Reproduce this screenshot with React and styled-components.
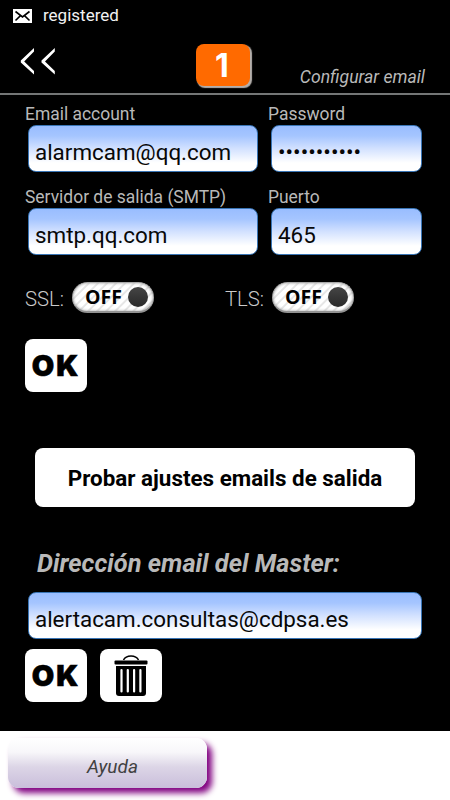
import React from "react";
import styled, { createGlobalStyle } from "styled-components";

const GlobalStyle = createGlobalStyle`
  * {
    box-sizing: border-box;
  }

  body {
    margin: 0;
    background: #000;
    font-family: Roboto, sans-serif;
  }
`;

const Screen = styled.div`
  display: flex;
  flex-direction: column;
  width: 450px;
  height: 800px;
  overflow: hidden;
  background: #000;
`;

const StatusBar = styled.div`
  display: flex;
  align-items: center;
  gap: 11px;
  height: 31px;
  padding-left: 13px;
  color: #f2f2f2;
  font-size: 17px;
  line-height: 31px;
`;

const Header = styled.header`
  display: flex;
  align-items: flex-start;
  height: 64px;
  padding: 13px 25px 0 20px;
  border-bottom: 2px solid #747676;
`;

const BackButton = styled.button`
  display: flex;
  width: 36px;
  margin: 3px 140px 0 0;
  padding: 0;
  border: 0;
  background: none;
`;

const Badge = styled.div`
  width: 54px;
  height: 42px;
  padding-right: 2px;
  border-radius: 8px;
  background: #ff6a00;
  box-shadow: 1.5px 1.5px 1px #b5b0ac;
  color: #fff;
  font: bold 32px/43px Inter, sans-serif;
  text-align: center;
`;

const Title = styled.div`
  margin: 21px 0 0 auto;
  color: #b9b9b9;
  font-size: 17.6px;
  font-style: italic;
  line-height: 24px;
  white-space: nowrap;
`;

const Main = styled.main`
  display: flex;
  flex-direction: column;
  height: 636px;
  padding: 9px 28px 0 25px;
`;

const FieldRow = styled.div`
  display: grid;
  grid-template-columns: 233px 154px;
  column-gap: 10px;
  height: ${(props) => props.$height}px;
`;

const Label = styled.label`
  display: block;
  height: 21px;
  color: #b9b9b9;
  font-size: 17.45px;
  line-height: 21px;
  white-space: nowrap;
`;

const Input = styled.input`
  display: block;
  width: ${(props) => props.$width}px;
  height: 47px;
  margin-left: 3px;
  padding: 7px 6px 0;
  border: 1px solid #3975b5;
  border-radius: 8px;
  outline: 0;
  background: linear-gradient(#99bdff 0%, #a5c5ff 22%, #d2e1ff 50%, #fff 82%);
  color: #080808;
  font-family: Roboto, sans-serif;
  font-size: 22.4px;
`;

const ToggleRow = styled.div`
  display: grid;
  grid-template-columns: 200px 130px;
  height: 31px;
  margin-top: 27px;
`;

const ToggleField = styled.div`
  display: grid;
  grid-template-columns: 47px 82px;
  color: #cacaca;
  font-size: 20.3px;
  font-weight: 300;
  line-height: 34px;
`;

const Switch = styled.button`
  display: flex;
  align-items: center;
  gap: 6px;
  width: 82px;
  height: 31px;
  padding: 0 0 1px 12px;
  border: 1px solid #aaa;
  border-bottom: 2px solid #929292;
  border-radius: 16px;
  background: repeating-linear-gradient(
    135deg,
    #fff 0,
    #fff 3.5px,
    #e6e6e6 4.5px,
    #e6e6e6 5.5px,
    #fff 6.4px
  );
  box-shadow: inset 0 0 3px #999;
  color: #000;
  font: bold 19.5px/26px "Open Sans", sans-serif;
`;

const Knob = styled.span`
  width: 20px;
  height: 20px;
  flex-shrink: 0;
  border-radius: 50%;
  background: linear-gradient(#454545, #292929);
`;

const Actions = styled.div`
  display: flex;
  gap: 13px;
  margin-top: ${(props) => props.$top}px;
`;

const ActionButton = styled.button`
  display: flex;
  align-items: center;
  justify-content: center;
  width: 62px;
  height: 53px;
  padding: 0;
  border: 0;
  border-radius: 8px;
  background: #fff;
  color: #000;
  font: 900 29px/53px Inter, sans-serif;
  letter-spacing: 2px;
  -webkit-text-stroke: 0.6px #000;
`;

const TestButton = styled.button`
  width: 380px;
  height: 59px;
  margin: 56px 0 0 10px;
  padding: 1px 0 0;
  border: 0;
  border-radius: 8px;
  background: #fff;
  color: #000;
  font: bold 22.4px/28px Roboto, sans-serif;
  white-space: nowrap;
`;

const MasterHeading = styled.h2`
  height: 30px;
  margin: 41px 0 14px 12px;
  color: #b9b9b9;
  font-size: 25.4px;
  font-style: italic;
  font-weight: bold;
  line-height: 30px;
  white-space: nowrap;
`;

const Footer = styled.footer`
  height: 69px;
  padding: 7px 8px;
  background: #fff;
`;

const HelpButton = styled.button`
  width: 199px;
  height: 50px;
  padding: 8px 0 0 10px;
  border: 0;
  border-radius: 11px;
  background: linear-gradient(#fff 0%, #f8f7fa 28%, #dcd5e6 58%, #c9bedb 100%);
  box-shadow: 5px 5px 6px #800080;
  color: #414141;
  font: italic 19px/24px Roboto, sans-serif;
`;

function EnvelopeIcon() {
  return (
    <svg width="19" height="14" viewBox="0 0 19 14">
      <path fill="#fff" d="M0 0h19v14H0z" />
      <path
        d="M2.5 2.5 9.5 8 16.5 2.5M2.5 11.5 7.5 6.7M16.5 11.5 11.5 6.7"
        fill="none"
        stroke="#000"
        strokeWidth="1.6"
      />
    </svg>
  );
}

function BackIcon() {
  return (
    <svg width="36" height="28" viewBox="0 0 36 28">
      <path
        fill="#fff"
        d="M14 1v3.5L4.2 14.5 14 24v3.5L.8 15.5v-2zM34.8 1v3.5L25 14.5l9.8 9.5v3.5L21.5 15.5v-2z"
      />
    </svg>
  );
}

function TrashIcon() {
  return (
    <svg width="34" height="43" viewBox="0 0 34 43">
      <path
        d="M9.5 6C12 .5 22 .5 24.5 6"
        fill="none"
        stroke="#000"
        strokeWidth="1.5"
      />
      <rect x=".5" y="6.5" width="33" height="4" rx="1" />
      <path d="M2 12h30v27q0 3-3 3H5q-3 0-3-3z" />
      <path
        d="M7.5 16v21.5M13.8 16v21.5M20.1 16v21.5M26.4 16v21.5"
        stroke="#fff"
        strokeWidth="2.2"
        strokeLinecap="round"
      />
    </svg>
  );
}

function Field({ id, label, width, ...inputProps }) {
  return (
    <div>
      <Label htmlFor={id}>{label}</Label>
      <Input id={id} $width={width} {...inputProps} />
    </div>
  );
}

function Toggle({ label }) {
  return (
    <ToggleField>
      <span>{label}</span>
      <Switch type="button">
        OFF
        <Knob />
      </Switch>
    </ToggleField>
  );
}

function App() {
  return (
    <>
      <GlobalStyle />
      <Screen>
        <StatusBar>
          <EnvelopeIcon />
          registered
        </StatusBar>
        <Header>
          <BackButton type="button">
            <BackIcon />
          </BackButton>
          <Badge>1</Badge>
          <Title>Configurar email</Title>
        </Header>
        <Main>
          <FieldRow $height={83}>
            <Field id="account" label="Email account" width={230} defaultValue="alarmcam@qq.com" />
            <Field id="password" label="Password" width={151} defaultValue="•••••••••••" />
          </FieldRow>
          <FieldRow $height={68}>
            <Field id="server" label="Servidor de salida (SMTP)" width={230} defaultValue="smtp.qq.com" />
            <Field id="port" label="Puerto" width={151} defaultValue="465" />
          </FieldRow>
          <ToggleRow>
            <Toggle label="SSL:" />
            <Toggle label="TLS:" />
          </ToggleRow>
          <Actions $top={26}>
            <ActionButton type="button">OK</ActionButton>
          </Actions>
          <TestButton type="button">Probar ajustes emails de salida</TestButton>
          <MasterHeading>Dirección email del Master:</MasterHeading>
          <Input $width={394} defaultValue="alertacam.consultas@cdpsa.es" />
          <Actions $top={10}>
            <ActionButton type="button">OK</ActionButton>
            <ActionButton type="button">
              <TrashIcon />
            </ActionButton>
          </Actions>
        </Main>
        <Footer>
          <HelpButton type="button">Ayuda</HelpButton>
        </Footer>
      </Screen>
    </>
  );
}

export default App;
